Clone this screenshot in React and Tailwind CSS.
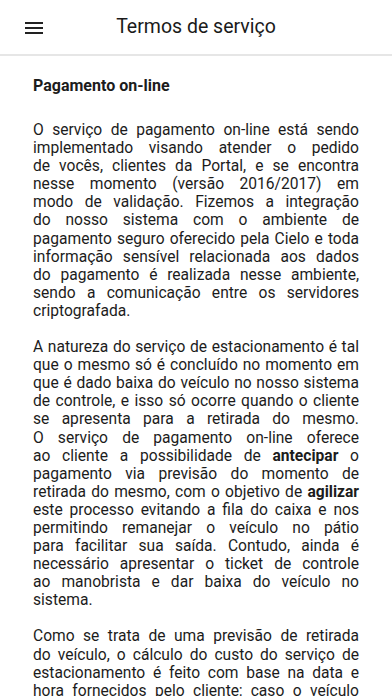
import React from "react";

// Text of the terms, broken into the same lines as the app shows them
const paragraphs = [
  [
    "O serviço de pagamento on-line está sendo",
    "implementado visando atender o pedido",
    "de vocês, clientes da Portal, e se encontra",
    "nesse momento (versão 2016/2017) em",
    "modo de validação. Fizemos a integração",
    "do nosso sistema com o ambiente de",
    "pagamento seguro oferecido pela Cielo e toda",
    "informação sensível relacionada aos dados",
    "do pagamento é realizada nesse ambiente,",
    "sendo a comunicação entre os servidores",
    "criptografada.",
  ],
  [
    "A natureza do serviço de estacionamento é tal",
    "que o mesmo só é concluído no momento em",
    "que é dado baixa do veículo no nosso sistema",
    "de controle, e isso só ocorre quando o cliente",
    "se apresenta para a retirada do mesmo.",
    "O serviço de pagamento on-line oferece",
    <>ao cliente a possibilidade de <b>antecipar</b> o</>,
    "pagamento via previsão do momento de",
    <>retirada do mesmo, com o objetivo de <b>agilizar</b></>,
    "este processo evitando a fila do caixa e nos",
    "permitindo remanejar o veículo no pátio",
    "para facilitar sua saída. Contudo, ainda é",
    "necessário apresentar o ticket de controle",
    "ao manobrista e dar baixa do veículo no",
    "sistema.",
  ],
  [
    "Como se trata de uma previsão de retirada",
    "do veículo, o cálculo do custo do serviço de",
    "estacionamento é feito com base na data e",
    "hora fornecidos pelo cliente; caso o veículo",
  ],
];

function Paragraph({ lines, first, last }) {
  return (
    <div className={first ? "mt-[26px]" : "mt-[18px]"}>
      {lines.map((line, i) =>
        i === lines.length - 1 && !last ? (
          <div key={i} className="whitespace-nowrap">{line}</div>
        ) : (
          <div key={i} className="whitespace-nowrap text-justify [text-align-last:justify] [word-spacing:-2px]">
            {line}
          </div>
        )
      )}
    </div>
  );
}

export default function App() {
  return (
    <div
      className="w-[392px] h-[696px] overflow-hidden bg-white text-[#1c1c1c]"
      style={{ fontFamily: "Roboto, 'Noto Sans', sans-serif" }}
    >
      {/* App bar */}
      <div className="relative flex items-center h-[56px] border-b-2 border-[#e6e6e6]">
        <button className="absolute left-[25px] top-[22px]" aria-label="Menu">
          <svg width="18" height="12" viewBox="0 0 18 12" className="block">
            <rect x="0" y="0" width="18" height="2" fill="#222" />
            <rect x="0" y="5" width="18" height="2" fill="#222" />
            <rect x="0" y="10" width="18" height="2" fill="#222" />
          </svg>
        </button>
        <h1 className="w-full text-center text-[19.5px] text-[#1a1a1a]">Termos de serviço</h1>
      </div>

      {/* Content */}
      <div className="px-[33px] pt-[21px] text-[15.6px] leading-[18.1px]">
        <h2 className="font-bold text-[16px] leading-[18px]">Pagamento on-line</h2>
        {paragraphs.map((lines, i) => (
          <Paragraph key={i} lines={lines} first={i === 0} last={i === paragraphs.length - 1} />
        ))}
      </div>
    </div>
  );
}
